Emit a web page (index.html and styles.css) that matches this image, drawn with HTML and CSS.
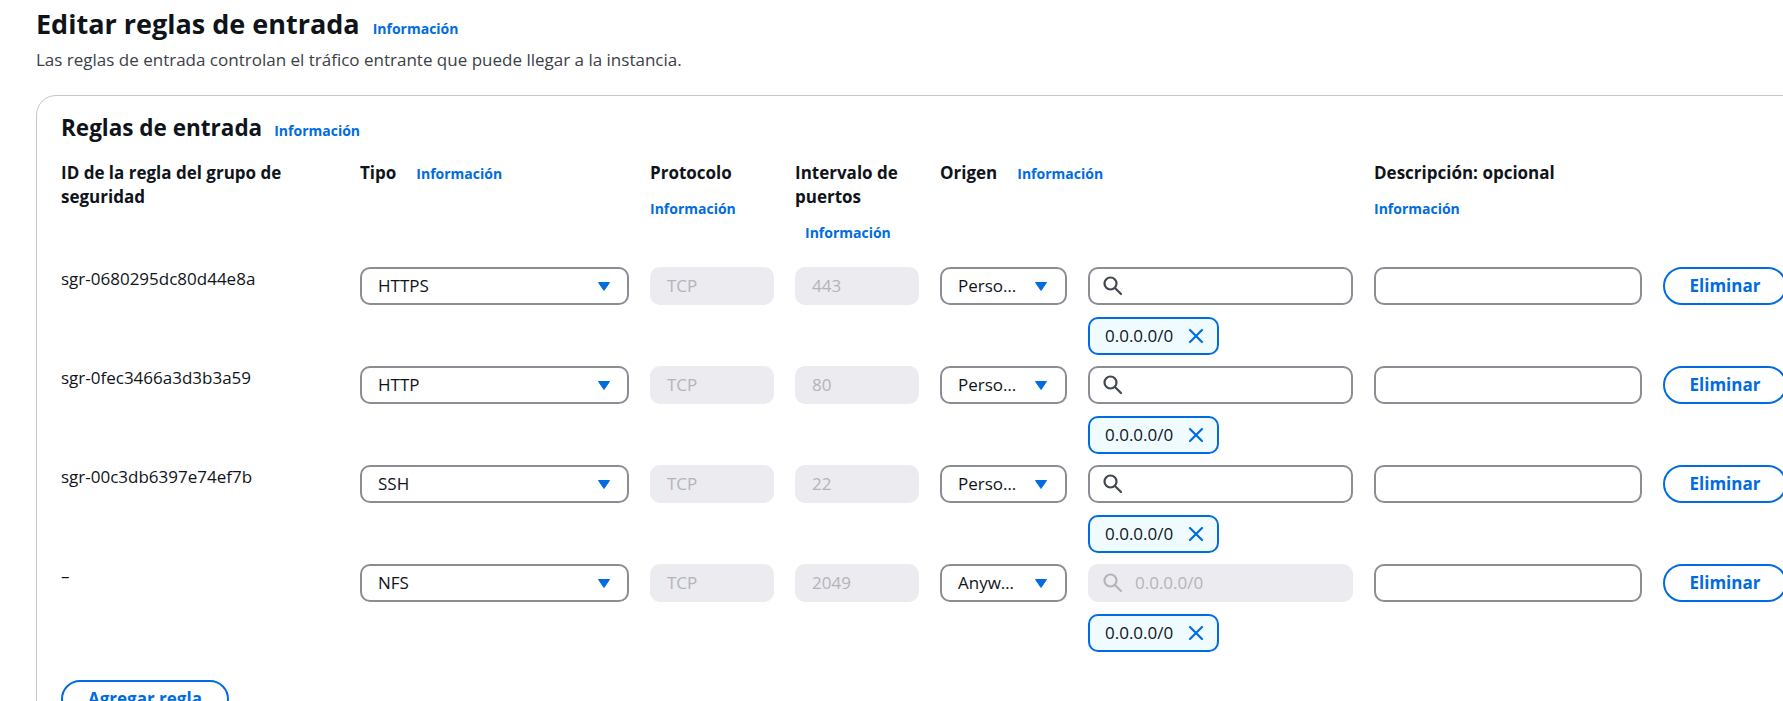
FILE: index.html
```html
<!DOCTYPE html>
<html lang="es">
<head>
<meta charset="utf-8">
<title>Editar reglas de entrada</title>
<link rel="stylesheet" href="styles.css">
</head>
<body>
<div class="page">
  <header class="page-header">
    <h1 class="title">Editar reglas de entrada <a class="info" href="#">Información</a></h1>
    <p class="subtitle">Las reglas de entrada controlan el tráfico entrante que puede llegar a la instancia.</p>
  </header>

  <section class="card">
    <h2 class="card-title">Reglas de entrada <a class="info" href="#">Información</a></h2>

    <div class="rule-grid rules-head">
      <div class="th"><span class="label">ID de la regla del grupo de seguridad</span></div>
      <div class="th"><span class="label">Tipo</span><a class="info" href="#">Información</a></div>
      <div class="th"><span class="label">Protocolo</span><a class="info" href="#">Información</a></div>
      <div class="th"><span class="label">Intervalo de puertos</span><a class="info info-indent" href="#">Información</a></div>
      <div class="th th-wide"><span class="label">Origen</span><a class="info" href="#">Información</a></div>
      <div class="th"><span class="label">Descripción: opcional</span><a class="info" href="#">Información</a></div>
      <div class="th"></div>
    </div>

    <div class="rules-body">
      <div class="rule-grid rule">
        <div class="rule-id">sgr-0680295dc80d44e8a</div>
        <div class="select"><span class="select-text">HTTPS</span><svg class="caret" viewBox="0 0 12 9"><polygon points="0.5,0.5 11.5,0.5 6,8.5"/></svg></div>
        <div class="field field-disabled">TCP</div>
        <div class="field field-disabled">443</div>
        <div class="select select-sm" title="Personalizada"><span class="select-text">Perso…</span><svg class="caret" viewBox="0 0 12 9"><polygon points="0.5,0.5 11.5,0.5 6,8.5"/></svg></div>
        <div class="source">
          <div class="field search"><svg class="search-icon" viewBox="0 0 20 20"><circle cx="7.5" cy="7.5" r="6"/><line x1="12" y1="12" x2="18" y2="18"/></svg></div>
          <div class="token"><span>0.0.0.0/0</span><svg class="x-icon" viewBox="0 0 16 16"><line x1="2" y1="2" x2="14" y2="14"/><line x1="14" y1="2" x2="2" y2="14"/></svg></div>
        </div>
        <div class="field"></div>
        <button class="btn" type="button">Eliminar</button>
      </div>

      <div class="rule-grid rule">
        <div class="rule-id">sgr-0fec3466a3d3b3a59</div>
        <div class="select"><span class="select-text">HTTP</span><svg class="caret" viewBox="0 0 12 9"><polygon points="0.5,0.5 11.5,0.5 6,8.5"/></svg></div>
        <div class="field field-disabled">TCP</div>
        <div class="field field-disabled">80</div>
        <div class="select select-sm" title="Personalizada"><span class="select-text">Perso…</span><svg class="caret" viewBox="0 0 12 9"><polygon points="0.5,0.5 11.5,0.5 6,8.5"/></svg></div>
        <div class="source">
          <div class="field search"><svg class="search-icon" viewBox="0 0 20 20"><circle cx="7.5" cy="7.5" r="6"/><line x1="12" y1="12" x2="18" y2="18"/></svg></div>
          <div class="token"><span>0.0.0.0/0</span><svg class="x-icon" viewBox="0 0 16 16"><line x1="2" y1="2" x2="14" y2="14"/><line x1="14" y1="2" x2="2" y2="14"/></svg></div>
        </div>
        <div class="field"></div>
        <button class="btn" type="button">Eliminar</button>
      </div>

      <div class="rule-grid rule">
        <div class="rule-id">sgr-00c3db6397e74ef7b</div>
        <div class="select"><span class="select-text">SSH</span><svg class="caret" viewBox="0 0 12 9"><polygon points="0.5,0.5 11.5,0.5 6,8.5"/></svg></div>
        <div class="field field-disabled">TCP</div>
        <div class="field field-disabled">22</div>
        <div class="select select-sm" title="Personalizada"><span class="select-text">Perso…</span><svg class="caret" viewBox="0 0 12 9"><polygon points="0.5,0.5 11.5,0.5 6,8.5"/></svg></div>
        <div class="source">
          <div class="field search"><svg class="search-icon" viewBox="0 0 20 20"><circle cx="7.5" cy="7.5" r="6"/><line x1="12" y1="12" x2="18" y2="18"/></svg></div>
          <div class="token"><span>0.0.0.0/0</span><svg class="x-icon" viewBox="0 0 16 16"><line x1="2" y1="2" x2="14" y2="14"/><line x1="14" y1="2" x2="2" y2="14"/></svg></div>
        </div>
        <div class="field"></div>
        <button class="btn" type="button">Eliminar</button>
      </div>

      <div class="rule-grid rule">
        <div class="rule-id">–</div>
        <div class="select"><span class="select-text">NFS</span><svg class="caret" viewBox="0 0 12 9"><polygon points="0.5,0.5 11.5,0.5 6,8.5"/></svg></div>
        <div class="field field-disabled">TCP</div>
        <div class="field field-disabled">2049</div>
        <div class="select select-sm" title="Anywhere-IPv4"><span class="select-text">Anyw…</span><svg class="caret" viewBox="0 0 12 9"><polygon points="0.5,0.5 11.5,0.5 6,8.5"/></svg></div>
        <div class="source">
          <div class="field search field-disabled"><svg class="search-icon" viewBox="0 0 20 20"><circle cx="7.5" cy="7.5" r="6"/><line x1="12" y1="12" x2="18" y2="18"/></svg><span class="search-value">0.0.0.0/0</span></div>
          <div class="token"><span>0.0.0.0/0</span><svg class="x-icon" viewBox="0 0 16 16"><line x1="2" y1="2" x2="14" y2="14"/><line x1="14" y1="2" x2="2" y2="14"/></svg></div>
        </div>
        <div class="field"></div>
        <button class="btn" type="button">Eliminar</button>
      </div>
    </div>

    <button class="btn btn-add" type="button">Agregar regla</button>
  </section>
</div>
</body>
</html>
```
FILE: styles.css
```css
html, body {
  margin: 0;
  padding: 0;
  overflow: hidden;
  background: #ffffff;
}

body {
  font-family: "Open Sans", "Noto Sans", sans-serif;
  font-size: 17px;
  line-height: 24px;
  color: #0f141a;
}

.page {
  padding: 6px 0 0 36px;
}

.title {
  display: flex;
  align-items: baseline;
  gap: 13px;
  margin: 0;
  font-size: 27px;
  line-height: 36px;
  font-weight: 700;
  color: #0f141a;
}

.subtitle {
  margin: 6px 0 0;
  font-size: 17px;
  line-height: 24px;
  color: #3b4048;
}

.info {
  font-size: 14px;
  line-height: 24px;
  font-weight: 700;
  color: #006ce0;
  text-decoration: none;
  white-space: nowrap;
}

.card {
  width: max-content;
  margin-top: 23px;
  padding: 18px 24px 40px;
  border: 1px solid #c6c6cd;
  border-radius: 20px;
  background: #ffffff;
}

.card-title {
  display: flex;
  align-items: baseline;
  gap: 12px;
  margin: 0;
  font-size: 22.5px;
  line-height: 28px;
  font-weight: 700;
}

.rule-grid {
  display: grid;
  grid-template-columns: 278px 269px 124px 124px 127px 265px 268px 124px;
  column-gap: 21px;
  align-items: start;
}

.rules-head {
  margin-top: 18px;
  margin-bottom: 22px;
}

.th {
  display: flex;
  flex-wrap: wrap;
  align-items: baseline;
  column-gap: 20px;
  row-gap: 12px;
}

.th-wide {
  grid-column: span 2;
}

.label {
  font-weight: 700;
  font-size: 17px;
  line-height: 24px;
}

.info-indent {
  margin-left: 10px;
}

.rules-body {
  display: flex;
  flex-direction: column;
  gap: 11px;
}

.rule-id {
  font-size: 17px;
  line-height: 24px;
}

.select,
.field,
.token,
.btn {
  box-sizing: border-box;
  height: 38px;
}

.select {
  display: flex;
  align-items: center;
  gap: 12px;
  padding: 0 17px 0 16px;
  border: 2px solid #8c8c94;
  border-radius: 10px;
  background: #ffffff;
}

.select-sm {
  padding-right: 18px;
}

.select-text {
  flex: 1;
  min-width: 0;
  white-space: nowrap;
}

.caret {
  width: 12px;
  height: 9px;
  flex: none;
  fill: #006ce0;
  stroke: #006ce0;
  stroke-width: 1;
  stroke-linejoin: round;
}

.field {
  display: flex;
  align-items: center;
  padding: 0 15px;
  border: 2px solid #8c8c94;
  border-radius: 10px;
  background: #ffffff;
}

.field-disabled {
  border-color: #ebebf0;
  background: #ebebf0;
  color: #b4b4bb;
}

.source {
  display: flex;
  flex-direction: column;
  align-items: flex-start;
  gap: 12px;
}

.source .field {
  align-self: stretch;
}

.search {
  padding-left: 13px;
  gap: 12px;
}

.search-icon {
  width: 20px;
  height: 20px;
  flex: none;
  fill: none;
  stroke: #424650;
  stroke-width: 2.2;
  stroke-linecap: round;
}

.field-disabled .search-icon {
  stroke: #b4b4bb;
}

.token {
  display: inline-flex;
  align-items: center;
  gap: 15px;
  padding: 0 13px 0 15px;
  border: 2px solid #006ce0;
  border-radius: 10px;
  background: #f0fbff;
  color: #0f141a;
}

.x-icon {
  width: 16px;
  height: 16px;
  flex: none;
  stroke: #006ce0;
  stroke-width: 2.2;
  stroke-linecap: round;
}

.btn {
  display: inline-flex;
  align-items: center;
  justify-content: center;
  padding: 0 25px;
  border: 2px solid #006ce0;
  border-radius: 20px;
  background: #ffffff;
  color: #006ce0;
  font-family: "Open Sans", "Noto Sans", sans-serif;
  font-size: 17px;
  font-weight: 700;
  line-height: 24px;
  white-space: nowrap;
  cursor: pointer;
}

.btn-add {
  margin-top: 28px;
}
```
